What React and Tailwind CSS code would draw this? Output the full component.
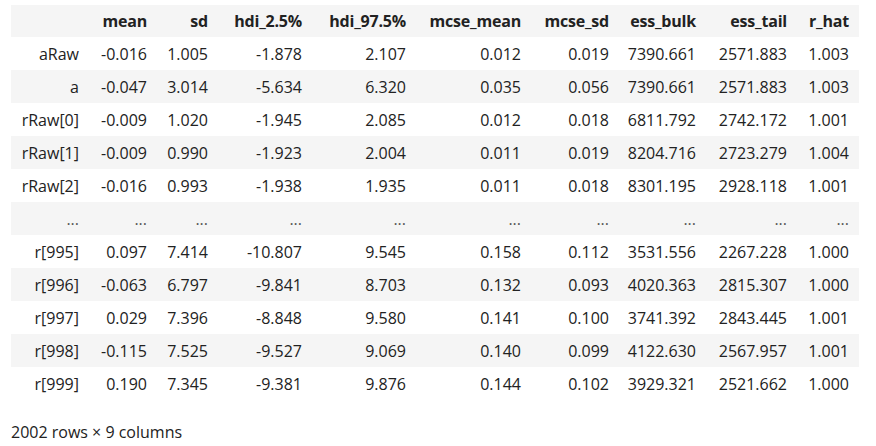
import React from "react";

const cols = ["mean", "sd", "hdi_2.5%", "hdi_97.5%", "mcse_mean", "mcse_sd", "ess_bulk", "ess_tail", "r_hat"];
const widths = ["w-[78px]", "w-[68px]", "w-[61px]", "w-[94px]", "w-[104px]", "w-[115px]", "w-[88px]", "w-[87px]", "w-[91px]", "w-[62px]"];

const rows = [
  ["aRaw", "-0.016", "1.005", "-1.878", "2.107", "0.012", "0.019", "7390.661", "2571.883", "1.003"],
  ["a", "-0.047", "3.014", "-5.634", "6.320", "0.035", "0.056", "7390.661", "2571.883", "1.003"],
  ["rRaw[0]", "-0.009", "1.020", "-1.945", "2.085", "0.012", "0.018", "6811.792", "2742.172", "1.001"],
  ["rRaw[1]", "-0.009", "0.990", "-1.923", "2.004", "0.011", "0.019", "8204.716", "2723.279", "1.004"],
  ["rRaw[2]", "-0.016", "0.993", "-1.938", "1.935", "0.011", "0.018", "8301.195", "2928.118", "1.001"],
  ["...", "...", "...", "...", "...", "...", "...", "...", "...", "..."],
  ["r[995]", "0.097", "7.414", "-10.807", "9.545", "0.158", "0.112", "3531.556", "2267.228", "1.000"],
  ["r[996]", "-0.063", "6.797", "-9.841", "8.703", "0.132", "0.093", "4020.363", "2815.307", "1.000"],
  ["r[997]", "0.029", "7.396", "-8.848", "9.580", "0.141", "0.100", "3741.392", "2843.445", "1.001"],
  ["r[998]", "-0.115", "7.525", "-9.527", "9.069", "0.140", "0.099", "4122.630", "2567.957", "1.001"],
  ["r[999]", "0.190", "7.345", "-9.381", "9.876", "0.144", "0.102", "3929.321", "2521.662", "1.000"],
];

export default function App() {
  return (
    <div
      className="w-[876px] h-[446px] bg-white text-[#222222] text-[16px] overflow-hidden"
      style={{ fontFamily: '"Open Sans", "Noto Sans", sans-serif' }}
    >
      <div className="pt-[5px] pl-[11px]">
        <table className="border-collapse table-fixed w-[848px]">
          <thead>
            <tr className="bg-[#f5f5f5] h-[32px]">
              <th className={`${widths[0]} p-0`}></th>
              {cols.map((c, i) => (
                <th key={c} className={`${widths[i + 1]} text-right pr-[10px] font-bold tracking-[-0.2px]`}>
                  {c}
                </th>
              ))}
            </tr>
          </thead>
          <tbody>
            {rows.map((r, ri) => (
              <tr key={ri} className={`h-[33px] ${ri % 2 === 1 ? "bg-[#f5f5f5]" : "bg-white"}`}>
                {r.map((v, ci) => (
                  <td
                    key={ci}
                    className={`${widths[ci]} text-right pr-[10px] ${v === "..." ? "text-[#555555]" : ""}`}
                  >
                    {v}
                  </td>
                ))}
              </tr>
            ))}
          </tbody>
        </table>
        <div className="mt-[20px]">2002 rows × 9 columns</div>
      </div>
    </div>
  );
}
